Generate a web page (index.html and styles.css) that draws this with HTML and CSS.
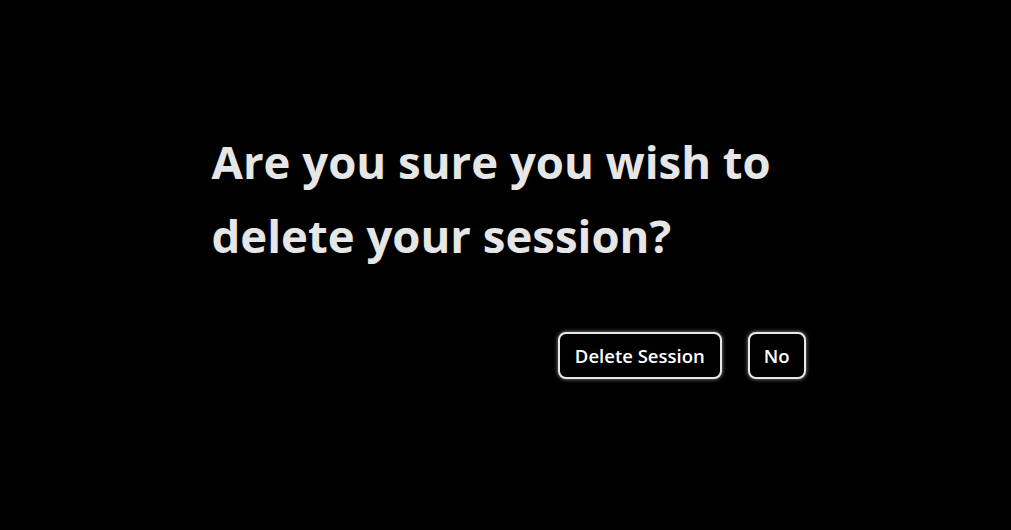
FILE: index.html
```html
<!DOCTYPE html>
<html lang="en">
<head>
<meta charset="utf-8">
<title>Delete session</title>
<link rel="stylesheet" href="styles.css">
</head>
<body>
<main class="page">
  <section class="dialog">
    <h1 class="question">Are you sure you wish to delete your session?</h1>
    <div class="actions">
      <button class="btn btn-wide" type="button">Delete Session</button>
      <button class="btn" type="button">No</button>
    </div>
  </section>
</main>
</body>
</html>
```
FILE: styles.css
```css
html, body {
  margin: 0;
  padding: 0;
  background: #000;
}
.page {
  width: 1011px;
  height: 530px;
  display: flex;
  justify-content: center;
  align-items: flex-start;
  padding-top: 124px;
  box-sizing: border-box;
}
.dialog {
  width: 600px;
  display: flex;
  flex-direction: column;
}
.question {
  margin: 0 0 0 6px;
  font-family: "Open Sans", sans-serif;
  font-weight: 700;
  font-size: 45.5px;
  line-height: 74px;
  color: #e6e6e6;
  max-width: 580px;
}
.actions {
  display: flex;
  justify-content: flex-end;
  gap: 26px;
  margin-top: 60px;
}
.btn {
  font-family: "Open Sans", sans-serif;
  font-weight: 600;
  font-size: 18.5px;
  color: #fff;
  background: #000;
  border: 2px solid #e8e8e8;
  border-radius: 8px;
  height: 47px;
  padding: 0 14px;
  box-shadow: 0 0 4px rgba(255,255,255,0.6);
}
.btn-wide {
  padding: 0 15px;
}
```
